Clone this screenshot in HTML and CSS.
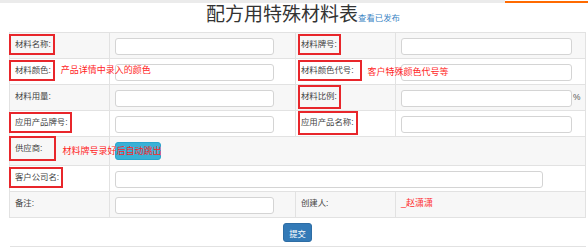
FILE: index.html
```html
<!DOCTYPE html>
<html>
<head>
  <meta charset="utf-8">
  <title>配方用特殊材料表</title>
  <link rel="stylesheet" href="styles.css">
</head>
<body>
  <!-- bovenbalk -->
  <div class="topbar">
    <div class="topbar-grey"></div>
    <div class="topbar-accent"></div>
  </div>

  <!-- titel -->
  <div class="title">
    <h1>配方用特殊材料表</h1><a href="#" class="title-link">查看已发布</a>
  </div>

  <!-- formulier -->
  <table class="form-table">
    <colgroup>
      <col class="col-label">
      <col class="col-field">
      <col class="col-label">
      <col class="col-field-wide">
    </colgroup>
    <tr class="odd">
      <td><span class="mark">材料名称:</span></td>
      <td><input type="text" class="field"></td>
      <td><span class="mark mark-tight">材料牌号:</span></td>
      <td><input type="text" class="field field-wide"></td>
    </tr>
    <tr>
      <td class="nowrap"><span class="mark">材料颜色:</span><span class="note">产品详情中录入的颜色</span></td>
      <td><input type="text" class="field"></td>
      <td class="nowrap"><span class="mark mark-tight mark-loose-right">材料颜色代号:</span><span class="note note-right">客户特殊颜色代号等</span></td>
      <td><input type="text" class="field field-wide"></td>
    </tr>
    <tr class="odd">
      <td>材料用量:</td>
      <td><input type="text" class="field"></td>
      <td><span class="mark mark-tight mark-tall">材料比例:</span></td>
      <td>
        <div class="with-unit"><input type="text" class="field field-wide"><span class="unit">%</span></div>
      </td>
    </tr>
    <tr>
      <td><span class="mark">应用产品牌号:</span></td>
      <td><input type="text" class="field"></td>
      <td><span class="mark mark-tight mark-tall">应用产品名称:</span></td>
      <td><input type="text" class="field field-wide"></td>
    </tr>
    <tr class="odd row-button">
      <td class="nowrap"><span class="mark mark-supplier">供应商:</span><span class="note note-supplier">材料牌号录好后自动跳出</span></td>
      <td colspan="3"><button type="button" class="btn btn-info"></button></td>
    </tr>
    <tr>
      <td><span class="mark">客户公司名:</span></td>
      <td colspan="3"><input type="text" class="field field-long"></td>
    </tr>
    <tr class="odd">
      <td>备注:</td>
      <td><input type="text" class="field"></td>
      <td>创建人:</td>
      <td><span class="creator">_赵潇潇</span></td>
    </tr>
    <tr class="row-button">
      <td colspan="4" class="center"><button type="button" class="btn btn-primary">提交</button></td>
    </tr>
  </table>
</body>
</html>
```

FILE: styles.css
```css
/* basis */
body {
  margin: 0;
  font-family: "Liberation Sans", "Noto Sans CJK SC", sans-serif;
  font-size: 8.4px;
  color: #444;
  background-color: white;
}

/* bovenbalk met oranje accent */
.topbar {
  display: flex;
  height: 4px;
}

.topbar-grey {
  flex: 1;
  height: 3px;
  background-color: #ebebeb;
}

.topbar-accent {
  width: 83px;
  height: 2px;
  margin-top: 1px;
  background-color: #ff6a00;
}

/* titel */
.title {
  text-align: center;
  padding-left: 18px;
  margin-bottom: 3px;
  line-height: 22px;
}

.title h1 {
  display: inline;
  margin: 0;
  font-size: 19px;
  font-weight: normal;
  color: #333;
}

.title-link {
  font-size: 8.4px;
  color: #3a83c4;
  text-decoration: none;
}

/* tabel */
.form-table {
  margin-left: 9px;
  width: 577px;
  border-collapse: collapse;
  table-layout: fixed;
}

.col-label {
  width: 100px;
}

.col-field {
  width: 186px;
}

.form-table td {
  border: 1px solid #e2e2e2;
  padding: 5px 5px 3px;
  vertical-align: top;
  line-height: 12px;
}

.form-table tr.odd td {
  background-color: #f7f7f7;
}

.row-button td {
  padding-bottom: 4px;
}

.form-table .row-button:last-child td {
  border-left: none;
  border-right: none;
}

.nowrap {
  white-space: nowrap;
}

.center {
  text-align: center;
}

/* invoervelden */
.field {
  display: block;
  box-sizing: border-box;
  width: 159px;
  height: 17px;
  margin: 0;
  padding: 0 4px;
  border: 1px solid #d4d4d4;
  border-radius: 3px;
  background-color: white;
}

.field-wide {
  width: 171px;
}

.field-long {
  width: 428px;
}

.with-unit {
  display: flex;
}

.unit {
  margin-left: 1px;
  color: #555;
  line-height: 14px;
}

/* rode markeringen */
.mark {
  border: 2px solid #e8262b;
  padding: 3px 2px 4px 4px;
  margin: 0 -4px 0 -6px;
}

.mark-tight {
  padding-left: 1px;
  margin-left: -3px;
}

.mark-loose-right {
  padding-right: 6px;
  margin-right: -8px;
}

.mark-tall {
  padding-top: 4px;
  padding-bottom: 6px;
}

.mark-supplier {
  padding: 5px 12px 6px 4px;
  margin-right: -14px;
}

.note {
  position: relative;
  z-index: 1;
  margin-left: 10px;
  font-size: 9px;
  color: #ff1f1f;
}

.note-right {
  margin-left: 14px;
  top: 2px;
}

.note-supplier {
  margin-left: 20px;
  top: 3px;
}

.creator {
  font-size: 9px;
  color: #ff2a2a;
}

/* knoppen */
.btn {
  display: inline-block;
  box-sizing: border-box;
  border-radius: 3px;
  font-family: inherit;
  font-size: 8.4px;
  color: white;
  cursor: pointer;
}

.btn-info {
  width: 46px;
  height: 18px;
  background-color: #39b1d7;
  border: 1px solid #2aa5cc;
}

.btn-primary {
  width: 29px;
  height: 19px;
  padding: 0;
  background-color: #337ab7;
  border: 1px solid #2e6da4;
}
```
